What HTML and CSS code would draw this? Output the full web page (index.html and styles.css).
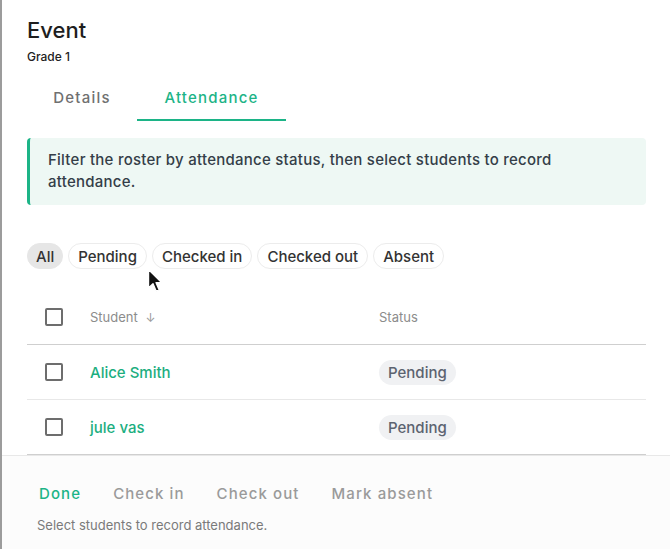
FILE: index.html
```html
<!DOCTYPE html>
<html lang="en">
<head>
    <meta charset="UTF-8">
    <meta name="viewport" content="width=device-width, initial-scale=1.0">
    <title>Event - Attendance</title>
    <link rel="stylesheet" href="styles.css">
</head>
<body>
    <div class="dialog">
        <div class="dialog-body">
            <!-- Header -->
            <h1 class="title">Event</h1>
            <div class="subtitle">Grade 1</div>

            <!-- Tabs -->
            <div class="tabs">
                <button type="button" class="tab">Details</button>
                <button type="button" class="tab active">Attendance</button>
            </div>

            <div class="alert">
                Filter the roster by attendance status, then select students to record attendance.
            </div>

            <!-- Status filters -->
            <div class="filters">
                <button type="button" class="chip selected">All</button>
                <button type="button" class="chip">Pending</button>
                <button type="button" class="chip">Checked in</button>
                <button type="button" class="chip">Checked out</button>
                <button type="button" class="chip">Absent</button>
            </div>

            <!-- Roster -->
            <div class="roster">
                <div class="row head">
                    <span class="check"></span>
                    <span class="col-name">Student <span class="sort">&#8595;</span></span>
                    <span class="col-status">Status</span>
                </div>
                <div class="row">
                    <span class="check"></span>
                    <a class="student" href="#">Alice Smith</a>
                    <span class="col-status"><span class="badge">Pending</span></span>
                </div>
                <div class="row last">
                    <span class="check"></span>
                    <a class="student" href="#">jule vas</a>
                    <span class="col-status"><span class="badge">Pending</span></span>
                </div>
            </div>
        </div>

        <!-- Actions -->
        <div class="dialog-footer">
            <div class="actions">
                <button type="button" class="action primary">Done</button>
                <button type="button" class="action">Check in</button>
                <button type="button" class="action">Check out</button>
                <button type="button" class="action">Mark absent</button>
            </div>
            <div class="hint">Select students to record attendance.</div>
        </div>

        <svg class="pointer" width="16" height="26" viewBox="0 0 16 26">
            <path d="M1.5 1.5 L1.5 20 L6 15.8 L9.2 23.2 L12.2 21.9 L9.1 14.7 L14.6 14.4 Z" fill="#111" stroke="#fff" stroke-width="1.4" stroke-linejoin="round"/>
        </svg>
    </div>
</body>
</html>
```

FILE: styles.css
```css
body {
    margin: 0;
    font-family: Inter, "Open Sans", sans-serif;
    color: #222;
    background: #fff;
}
button {
    font-family: inherit;
    cursor: pointer;
}
.dialog {
    position: relative;
    min-height: 549px;
    border-left: 2px solid #9c9c9c;
    box-sizing: border-box;
}
.dialog-body {
    padding: 16px 24px 0 25px;
}
.title {
    margin: 0;
    font-size: 22px;
    line-height: 28px;
    font-weight: 500;
    color: #1e1e1e;
}
.subtitle {
    margin-top: 5px;
    font-size: 12px;
    line-height: 16px;
    font-weight: 500;
    color: #222;
}
.tabs {
    display: flex;
    margin-top: 11px;
}
.tab {
    border: 0;
    background: none;
    padding: 12px 25px 11px;
    font-size: 15px;
    line-height: 20px;
    font-weight: 500;
    letter-spacing: 1.2px;
    color: #707070;
    border-bottom: 2px solid transparent;
}
.tab:first-child {
    width: 110px;
}
.tab.active {
    width: 149px;
    color: #1cb487;
    border-bottom-color: #1cb487;
}
.alert {
    margin-top: 17px;
    background: #eef8f4;
    border-left: 3px solid #1cb487;
    border-radius: 4px;
    padding: 11px 76px 12px 18px;
    font-size: 15px;
    line-height: 22px;
    font-weight: 500;
    letter-spacing: 0.25px;
    color: #343e48;
}
.filters {
    display: flex;
    gap: 5px;
    margin-top: 38px;
}
.chip {
    height: 26px;
    padding: 0 9px;
    border: 1px solid #ececec;
    border-radius: 13px;
    background: #fff;
    font-size: 15px;
    font-weight: 500;
    color: #333;
}
.chip.selected {
    padding: 0 8px;
    background: #e6e6e6;
    border-color: #e6e6e6;
}
.roster {
    margin-top: 21px;
}
.row {
    display: grid;
    grid-template-columns: 63px 289px 1fr;
    align-items: center;
    height: 54px;
    border-bottom: 1px solid #e8e8e8;
}
.row.head {
    border-bottom-color: #cfcfcf;
}
.row.last {
    border-bottom-color: #cfcfcf;
}
.check {
    width: 14px;
    height: 14px;
    margin-left: 18px;
    border: 2px solid #6d6d6d;
    border-radius: 2px;
}
.col-name {
    font-size: 13px;
    color: #8c8c8c;
}
.sort {
    margin-left: 4px;
    font-size: 12px;
    color: #9a9a9a;
}
.col-status {
    font-size: 13px;
    color: #8c8c8c;
}
.student {
    font-size: 15px;
    font-weight: 500;
    color: #1cae7f;
    text-decoration: none;
}
.badge {
    display: inline-block;
    height: 25px;
    line-height: 25px;
    padding: 0 9px;
    border-radius: 13px;
    background: #f0f1f3;
    font-size: 15px;
    font-weight: 500;
    color: #5c6370;
}
.dialog-footer {
    border-top: 1px solid #e8e8e8;
    background: #fcfcfc;
    padding: 24px 25px 20px;
    min-height: 94px;
    box-sizing: border-box;
}
.actions {
    display: flex;
    gap: 8px;
}
.action {
    border: 0;
    background: none;
    padding: 4px 12px;
    font-size: 15px;
    line-height: 20px;
    font-weight: 500;
    letter-spacing: 1.1px;
    color: #9a9a9a;
}
.action.primary {
    color: #1cb487;
}
.hint {
    margin: 9px 0 0 10px;
    font-size: 13px;
    color: #7a7a7a;
}
.pointer {
    position: absolute;
    left: 145px;
    top: 268px;
}
```
